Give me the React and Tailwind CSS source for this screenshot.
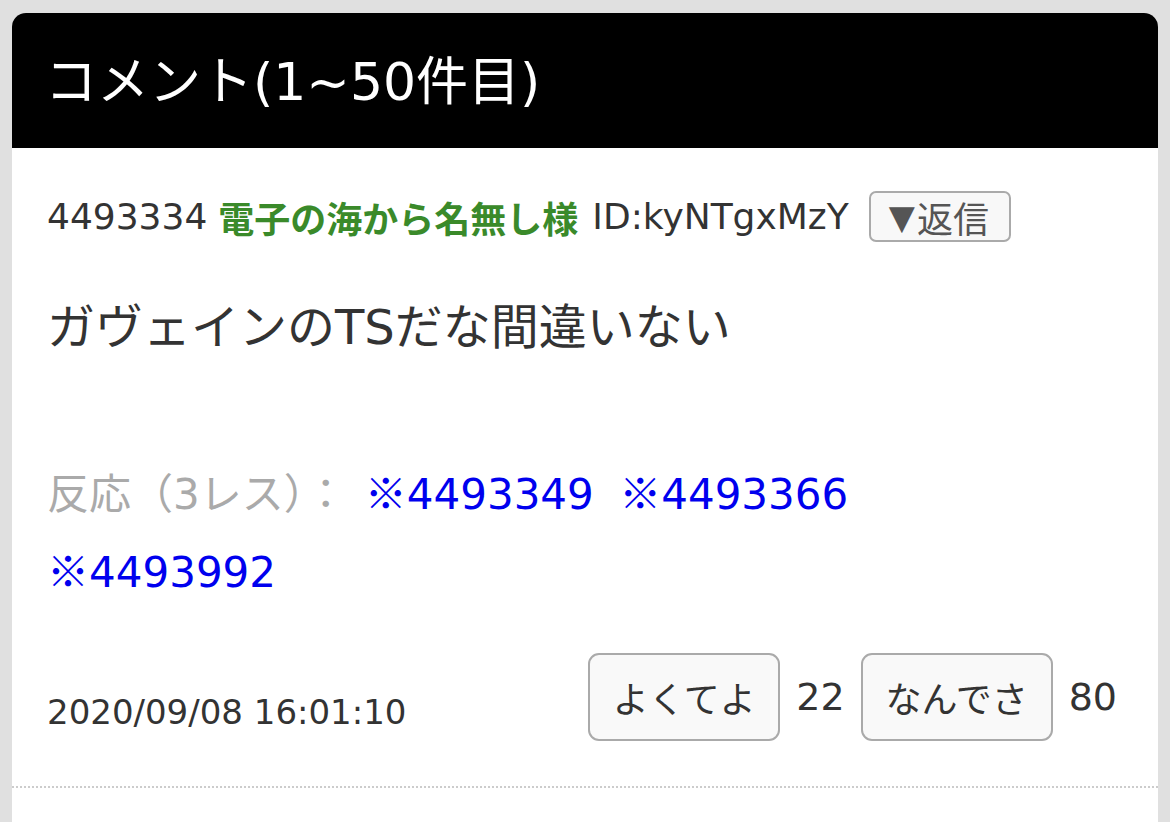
export default function App() {
  const font = { fontFamily: '"DejaVu Sans", "Noto Sans CJK JP", sans-serif' };
  const cjk = { fontFamily: '"Noto Sans CJK JP", sans-serif' };
  return (
    <div className="min-h-[822px] bg-[#e0e0e0] px-[12px] pt-[13px] flex flex-col" style={font}>
      <div className="flex-1 bg-white rounded-t-[14px] overflow-hidden flex flex-col">
        <div className="bg-black h-[135px] flex items-center pl-[33px] pr-[35px]">
          <h1 className="text-white text-[52px] leading-none font-normal mt-[2px]">コメント(1~50件目)</h1>
        </div>
        <div className="border-b-2 border-dotted border-[#cccccc] px-[35px] pt-[43px] pb-[45px]">
          <div className="flex items-center h-[51px] text-[36px] text-[#333333] leading-none whitespace-nowrap">
            <span>4493334</span>
            <span className="ml-[11px] font-bold text-[#3a8a2a]" style={cjk}>電子の海から名無し様</span>
            <span className="ml-[14px]">ID:kyNTgxMzY</span>
            <button className="ml-[20px] h-[51px] pl-[18px] pr-[20px] border-2 border-[#aaaaaa] rounded-[7px] bg-[#f8f8f8] text-[#555555] text-[36px] leading-none flex items-center">
              <span className="text-[34px] mr-[2px]">▼</span>
              <span style={cjk}>返信</span>
            </button>
          </div>
          <p className="mt-[49px] text-[48px] leading-[72px] text-[#333333]">ガヴェインのTSだな間違いない</p>
          <div className="mt-[93px] text-[42px] leading-[78px] w-[840px]">
            <span className="text-[#aaaaaa] mr-[18px]">反応（3レス）<span className="leading-none" style={cjk}>：</span></span>
            <a className="text-[#0000ee] mr-[12px]"><span className="leading-none" style={cjk}>※</span>4493349</a>{' '}
            <a className="text-[#0000ee] mr-[12px]"><span className="leading-none" style={cjk}>※</span>4493366</a>{' '}
            <a className="text-[#0000ee]"><span className="leading-none" style={cjk}>※</span>4493992</a>
          </div>
          <div className="mt-[41px] flex items-end justify-between pr-[6px]">
            <span className="text-[34px] text-[#333333] leading-none mb-[12px]">2020/09/08 16:01:10</span>
            <div className="flex items-center text-[38px] text-[#333333]">
              <button className="h-[88px] w-[192px] border-2 border-[#aaaaaa] rounded-[11px] bg-[#f9f9f9] text-[36px] text-[#333333]" style={cjk}>よくてよ</button>
              <span className="mx-[16px]">22</span>
              <button className="h-[88px] w-[192px] border-2 border-[#aaaaaa] rounded-[11px] bg-[#f9f9f9] text-[36px] text-[#333333]" style={cjk}>なんでさ</button>
              <span className="ml-[16px]">80</span>
            </div>
          </div>
        </div>
      </div>
    </div>
  );
}
